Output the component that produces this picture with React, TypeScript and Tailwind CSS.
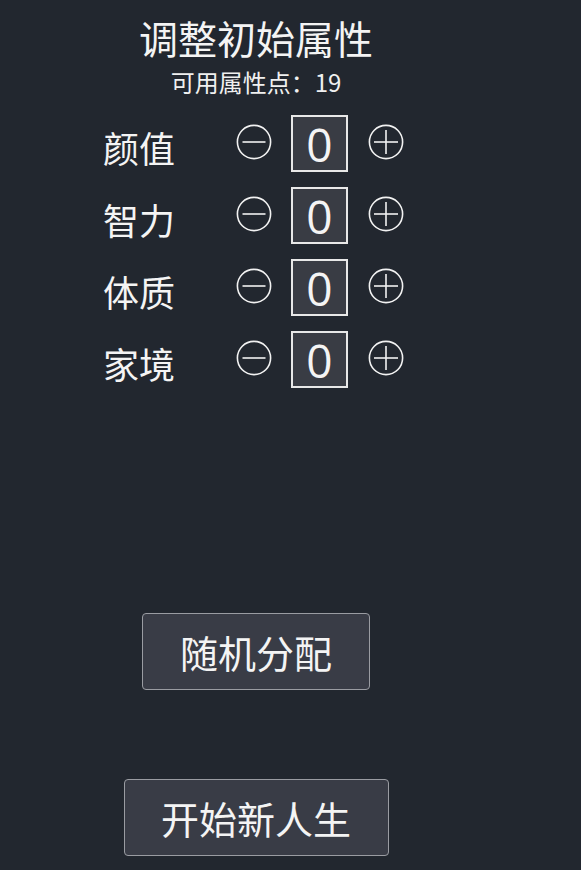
import React from "react";

const font = { fontFamily: '"Noto Sans CJK SC", "Noto Sans", sans-serif' };

function MinusIcon() {
  return (
    <svg width="36" height="36" viewBox="0 0 36 36" className="block mb-[3px]">
      <circle cx="18" cy="18" r="16.6" fill="none" stroke="#f2f2f2" strokeWidth="1.6" />
      <line x1="6.5" y1="18" x2="29.5" y2="18" stroke="#f2f2f2" strokeWidth="1.6" />
    </svg>
  );
}

function PlusIcon() {
  return (
    <svg width="36" height="36" viewBox="0 0 36 36" className="block mb-[3px]">
      <circle cx="18" cy="18" r="16.6" fill="none" stroke="#f2f2f2" strokeWidth="1.6" />
      <line x1="6" y1="18" x2="30" y2="18" stroke="#f2f2f2" strokeWidth="1.6" />
      <line x1="18" y1="6" x2="18" y2="30" stroke="#f2f2f2" strokeWidth="1.6" />
    </svg>
  );
}

function Row({ label }: { label: string }) {
  return (
    <div className="flex items-center h-[57px]">
      <div className="w-[134px] pl-[1px] text-[36px] leading-[40px] pt-[7px] text-[#f4f4f4]">{label}</div>
      <MinusIcon />
      <div className="ml-[19px] w-[57px] h-[57px] border-2 border-[#e8e8e8] bg-[#393c44] flex items-center justify-center text-[46px] leading-none text-[#f4f4f4]" style={{ fontFamily: '"Open Sans", "Noto Sans", sans-serif' }}>
        0
      </div>
      <div className="ml-[20px]">
        <PlusIcon />
      </div>
    </div>
  );
}

export default function App() {
  return (
    <div className="w-[581px] h-[870px] bg-[#22272f] overflow-hidden" style={font}>
      <div className="w-[512px] flex flex-col items-center">
        <div className="mt-[14px] text-[39px] leading-[46px] text-[#f4f4f4]">调整初始属性</div>
        <div className="mt-[8px] text-[24px] leading-[28px] text-[#f0f0f0]">可用属性点：19</div>
        <div className="self-start ml-[102px] mt-[19px] flex flex-col gap-[15px]">
          <Row label="颜值" />
          <Row label="智力" />
          <Row label="体质" />
          <Row label="家境" />
        </div>
        <button className="mt-[225px] w-[228px] h-[77px] rounded-[4px] border border-[#9a9ca2] bg-[#393c46] text-[38px] text-[#f4f4f4] flex items-center justify-center" style={font}>
          随机分配
        </button>
        <button className="mt-[89px] w-[265px] h-[77px] rounded-[4px] border border-[#9a9ca2] bg-[#393c46] text-[38px] text-[#f4f4f4] flex items-center justify-center" style={font}>
          开始新人生
        </button>
      </div>
    </div>
  );
}
